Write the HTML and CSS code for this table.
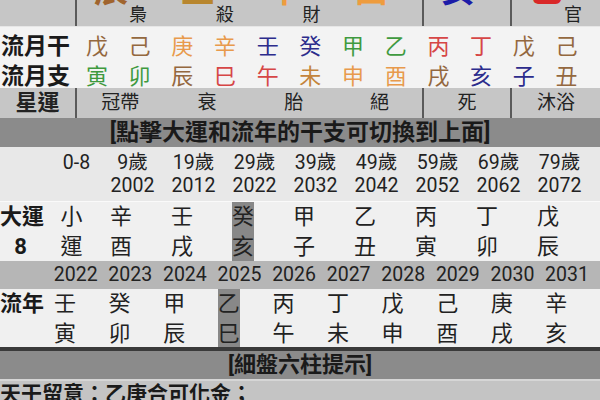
FILE: index.html
```html
<!DOCTYPE html>
<html lang="zh-Hant">
<head>
<meta charset="utf-8">
<link rel="stylesheet" href="styles.css">
</head>
<body>
<div class="page">
  <div class="six top">
    <div class="lbl"></div>
    <div class="tc"><span class="big c-brown2">辰</span><span class="god">梟</span></div>
    <div class="tc"><span class="big c-gold">丑</span><span class="god">殺</span></div>
    <div class="tc"><span class="big c-orange2">申</span><span class="god">財</span></div>
    <div class="tc div"><span class="big c-orange2">酉</span></div>
    <div class="tc div"><span class="big c-blue2">亥</span></div>
    <div class="tc"><span class="big c-red2">巳</span><span class="god">官</span></div>
  </div>

  <div class="month r1">
    <div class="mlbl">流月干</div>
    <span class="c-earth">戊</span><span class="c-earth">己</span><span class="c-metal">庚</span><span class="c-metal">辛</span>
    <span class="c-water">壬</span><span class="c-water">癸</span><span class="c-wood">甲</span><span class="c-wood">乙</span>
    <span class="c-fire">丙</span><span class="c-fire">丁</span><span class="c-earth">戊</span><span class="c-earth">己</span>
  </div>
  <div class="month r2">
    <div class="mlbl">流月支</div>
    <span class="c-wood">寅</span><span class="c-wood">卯</span><span class="c-earth">辰</span><span class="c-fire">巳</span>
    <span class="c-fire">午</span><span class="c-earth2">未</span><span class="c-metal">申</span><span class="c-metal">酉</span>
    <span class="c-earth">戌</span><span class="c-water">亥</span><span class="c-water">子</span><span class="c-earth">丑</span>
  </div>

  <div class="six star">
    <div class="lbl slbl">星運</div>
    <div class="sc">冠帶</div>
    <div class="sc">衰</div>
    <div class="sc">胎</div>
    <div class="sc div">絕</div>
    <div class="sc div">死</div>
    <div class="sc">沐浴</div>
  </div>

  <div class="bar bar1">[點擊大運和流年的干支可切換到上面]</div>

  <div class="nine ages">
    <div></div>
    <div class="age first">0-8</div>
    <div class="age">9歲<br>2002</div>
    <div class="age">19歲<br>2012</div>
    <div class="age">29歲<br>2022</div>
    <div class="age">39歲<br>2032</div>
    <div class="age">49歲<br>2042</div>
    <div class="age">59歲<br>2052</div>
    <div class="age">69歲<br>2062</div>
    <div class="age">79歲<br>2072</div>
  </div>

  <div class="nine dayun">
    <div class="rlbl">大運<br>8</div>
    <div class="pc center">小<br>運</div>
    <div class="pc"><div class="pi">辛<br>酉</div></div>
    <div class="pc"><div class="pi">壬<br>戌</div></div>
    <div class="pc"><div class="pi sel">癸<br>亥</div></div>
    <div class="pc"><div class="pi">甲<br>子</div></div>
    <div class="pc"><div class="pi">乙<br>丑</div></div>
    <div class="pc"><div class="pi">丙<br>寅</div></div>
    <div class="pc"><div class="pi">丁<br>卯</div></div>
    <div class="pc"><div class="pi">戊<br>辰</div></div>
  </div>

  <div class="ten years">
    <div></div>
    <div class="yr">2022</div><div class="yr">2023</div><div class="yr">2024</div><div class="yr">2025</div><div class="yr">2026</div>
    <div class="yr">2027</div><div class="yr">2028</div><div class="yr">2029</div><div class="yr">2030</div><div class="yr">2031</div>
  </div>

  <div class="ten liunian">
    <div class="rlbl nlbl">流年</div>
    <div class="pc"><div class="pi">壬<br>寅</div></div>
    <div class="pc"><div class="pi">癸<br>卯</div></div>
    <div class="pc"><div class="pi">甲<br>辰</div></div>
    <div class="pc"><div class="pi sel">乙<br>巳</div></div>
    <div class="pc"><div class="pi">丙<br>午</div></div>
    <div class="pc"><div class="pi">丁<br>未</div></div>
    <div class="pc"><div class="pi">戊<br>申</div></div>
    <div class="pc"><div class="pi">己<br>酉</div></div>
    <div class="pc"><div class="pi">庚<br>戌</div></div>
    <div class="pc"><div class="pi">辛<br>亥</div></div>
  </div>

  <div class="bar bar2">[細盤六柱提示]</div>

  <div class="tip">天干留意：乙庚合可化金；</div>
</div>
</body>
</html>
```

FILE: styles.css
```css
html, body {
  margin: 0;
  padding: 0;
}
body {
  width: 600px;
  height: 400px;
  overflow: hidden;
  background: #c4c4c4;
  font-family: Roboto, "Noto Sans CJK TC", sans-serif;
  color: #222;
}
.page {
  display: flex;
  flex-direction: column;
  width: 600px;
}

/* six-column sections (top and 星運) */
.six {
  display: grid;
  grid-template-columns: 77px repeat(4, 86.75px) 88px 88px;
  background: #c6c6c6;
}
.six .lbl {
  border-right: 2px solid #5a5a5a;
}
.six .div {
  border-right: 2px solid #5a5a5a;
}
.top {
  height: 27px;
  overflow: hidden;
  border-bottom: 1px solid #e6e6e6;
  box-sizing: border-box;
}
.tc {
  display: flex;
  align-items: flex-start;
  padding-left: 17px;
}
.big {
  font-size: 34px;
  line-height: 34px;
  margin-top: -27px;
  font-weight: 700;
}
.god {
  font-size: 18px;
  line-height: 18px;
  margin-top: 6px;
  margin-left: 1px;
}
.c-brown2 { color: #a0642e; }
.c-gold { color: #b8862e; }
.c-orange2 { color: #ee9c3e; }
.c-blue2 { color: #1c1ca8; }
.c-red2 { color: #d92828; }

/* monthly rows */
.month {
  display: grid;
  grid-template-columns: 75.6px repeat(12, 42.7px);
  background: #f3f3f3;
  font-size: 22px;
  align-items: center;
  text-align: center;
}
.r1 { height: 30px; }
.r2 { height: 31px; }
.mlbl {
  font-weight: 700;
  font-size: 23px;
  text-align: left;
  padding-left: 1px;
  color: #1a1a1a;
}
.c-earth { color: #94683f; }
.c-earth2 { color: #c4843c; }
.c-metal { color: #e89a4c; }
.c-water { color: #2c2c8c; }
.c-wood { color: #3f9a3f; }
.c-fire { color: #d64646; }

/* 星運 */
.star {
  height: 30px;
  align-items: center;
  font-size: 19px;
  text-align: center;
}
.star > div {
  height: 30px;
  line-height: 30px;
}
.slbl {
  font-weight: 700;
  font-size: 22px;
  padding-left: 0;
}

/* header bars */
.bar {
  background: #8b8b8b;
  font-weight: 700;
  text-align: center;
  color: #1a1a1a;
  white-space: nowrap;
}
.bar1 {
  height: 29px;
  line-height: 29px;
  font-size: 23px;
}
.bar2 {
  height: 28px;
  line-height: 28px;
  font-size: 22px;
  border-top: 4px solid #3a3a3a;
  border-bottom: 2px solid #d6d6d6;
}

/* ages */
.nine {
  display: grid;
  grid-template-columns: 41px repeat(9, 61px);
}
.ages {
  height: 50px;
  background: #e8e8e8;
  border-bottom: 1px solid #fafafa;
  font-size: 19.5px;
  line-height: 23px;
  padding-top: 4px;
  box-sizing: content-box;
}
.age {
  text-align: center;
}
.age.first {
  padding-left: 10px;
}

/* 大運 row */
.dayun {
  height: 59px;
  background: #f0f0f0;
  font-size: 22px;
  line-height: 29.5px;
}
.rlbl {
  font-weight: 700;
  font-size: 22px;
  text-align: center;
  white-space: nowrap;
  color: #1a1a1a;
}
.pc {
  display: flex;
}
.pc.center {
  justify-content: center;
}
.pi {
  margin-left: 8px;
  width: 22px;
  text-align: center;
}
.pi.sel {
  background: #888888;
}

/* years bar */
.ten {
  display: grid;
  grid-template-columns: 46px repeat(10, 54.6px);
}
.years {
  height: 28px;
  background: #b6b6b6;
  font-size: 19.5px;
  line-height: 28px;
}
.yr {
  text-align: right;
  padding-right: 3px;
}

/* 流年 row */
.liunian {
  height: 58px;
  background: #f0f0f0;
  font-size: 22px;
  line-height: 30px;
}
.liunian .pi {
  margin-left: 8px;
}
.nlbl {
  text-align: left;
  line-height: 30px;
}

/* bottom tip */
.tip {
  background: #c4c4c4;
  font-size: 21px;
  font-weight: 700;
  line-height: 26px;
  padding-top: 0;
  color: #1a1a1a;
  white-space: nowrap;
}
```
